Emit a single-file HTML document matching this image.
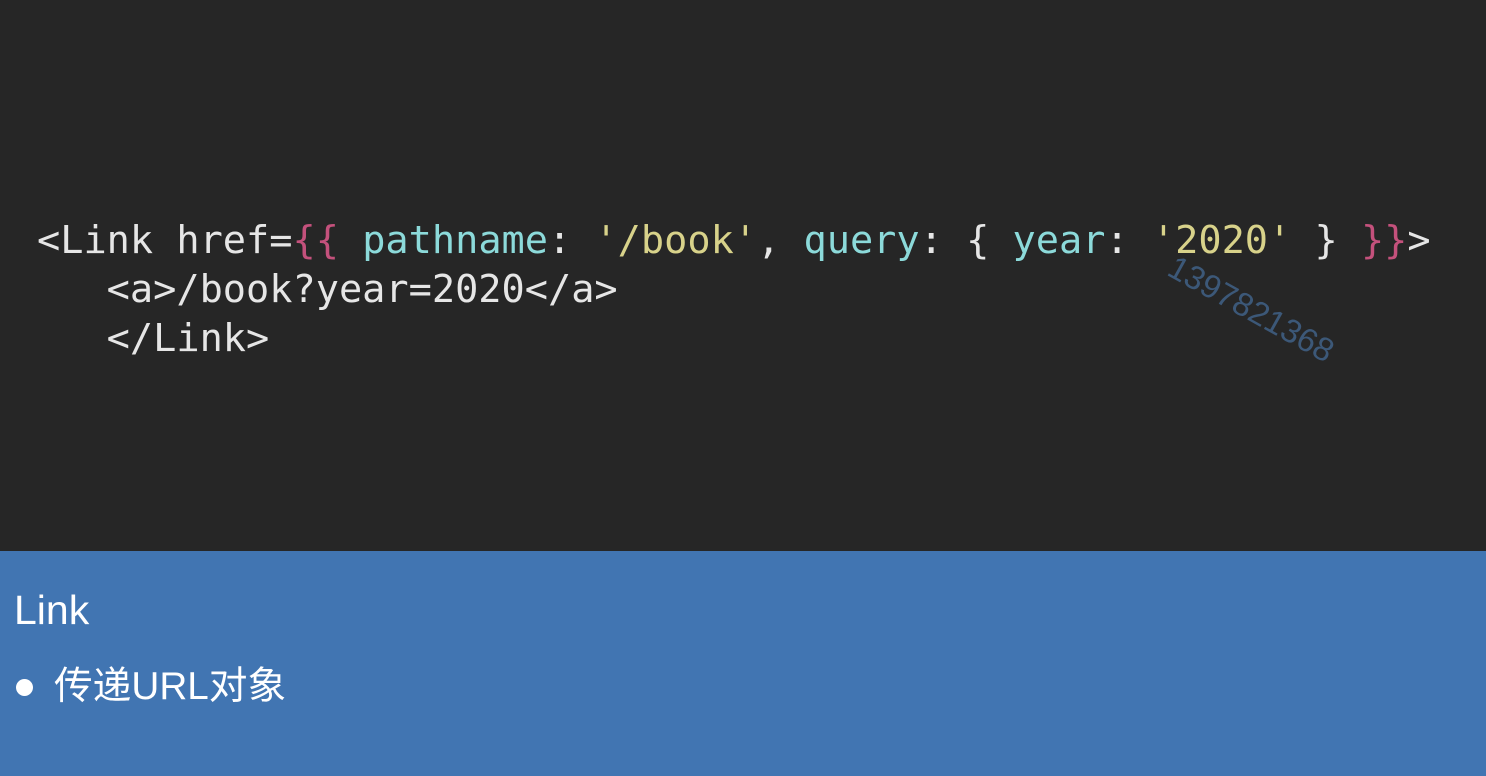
<!DOCTYPE html>
<html><head><meta charset="utf-8"><style>
body{margin:0;width:1486px;height:776px;background:#262626;position:relative;overflow:hidden}
pre{position:absolute;left:37px;top:216px;margin:0;font-family:"DejaVu Sans Mono","Liberation Mono",monospace;font-size:38.6px;line-height:49px;color:#e6e6e6}
.p{color:#c4517c}.c{color:#8cdada}.y{color:#d8d28a}
.wm{position:absolute;left:1180px;top:248px;font-family:"Liberation Sans",sans-serif;font-size:33px;color:#3c5878;transform:rotate(29deg);transform-origin:0 0}
.blue{position:absolute;left:0;top:551px;width:1486px;height:225px;background:#4175b2;color:#fff;font-family:"Liberation Sans","Noto Sans CJK SC",sans-serif}
.t{position:absolute;left:14px;top:36px;font-size:41px}
.b{position:absolute;left:16px;top:128px;width:17px;height:17px;border-radius:50%;background:#fff}
.l{position:absolute;left:54px;top:104px;font-size:38.7px}
</style></head><body>
<pre>&lt;Link href=<span class="p">{{</span> <span class="c">pathname</span>: <span class="y">'/book'</span>, <span class="c">query</span>: { <span class="c">year</span>: <span class="y">'2020'</span> } <span class="p">}}</span>&gt;
   &lt;a&gt;/book?year=2020&lt;/a&gt;
   &lt;/Link&gt;</pre>
<div class="wm">1397821368</div>
<div class="blue"><div class="t">Link</div><div class="b"></div><div class="l">传递URL对象</div></div>
</body></html>
